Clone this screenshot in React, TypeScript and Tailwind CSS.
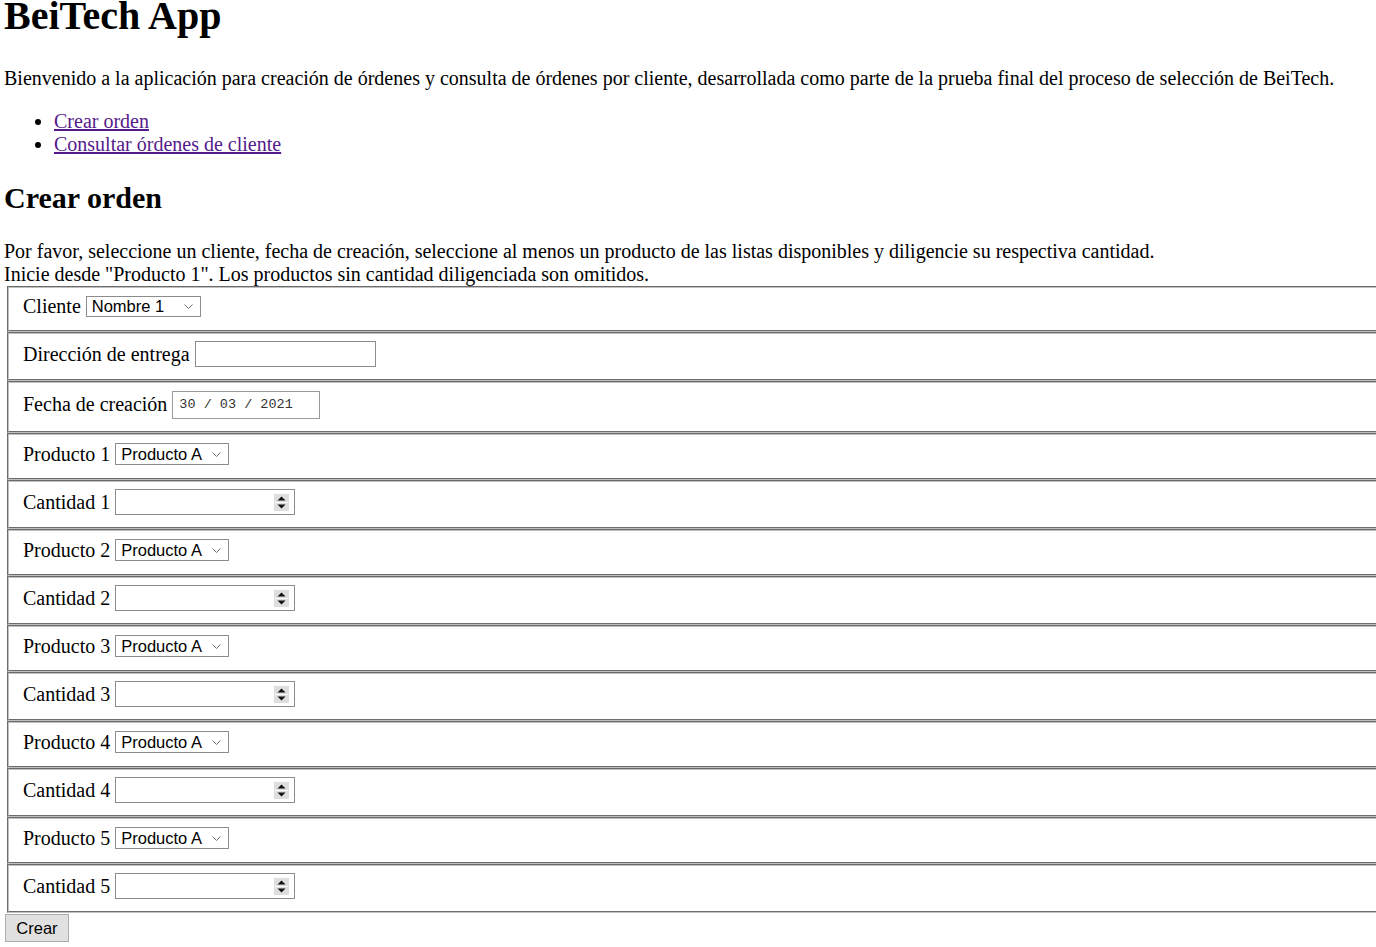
import React from "react";

const serif = "font-['Liberation_Serif','Times_New_Roman',serif]";
const sans = "font-['Liberation_Sans',Arial,sans-serif]";

function Chevron(): React.ReactElement {
  return (
    <svg width="9" height="5" viewBox="0 0 9 5" className="shrink-0">
      <polyline points="0.5,0.5 4.5,4.5 8.5,0.5" fill="none" stroke="#6e6e6e" strokeWidth="1" />
    </svg>
  );
}

function Select({ value, width, height }: { value: string; width: string; height: string }): React.ReactElement {
  return (
    <div
      className={`${width} ${height} ${sans} flex shrink-0 items-center justify-between border border-[#8c8c8c] bg-white pl-[5px] pr-[7px] text-[16.5px] leading-none text-black`}
    >
      <span>{value}</span>
      <Chevron />
    </div>
  );
}

function Spinner(): React.ReactElement {
  return (
    <svg width="15" height="17" viewBox="0 0 15 17" className="shrink-0">
      <rect x="0" y="0" width="15" height="17" fill="#dedede" />
      <line x1="1" y1="8.5" x2="14" y2="8.5" stroke="#ffffff" strokeWidth="1" />
      <polygon points="3.5,6.5 7.5,2.5 11.5,6.5" fill="#111111" />
      <polygon points="3.5,10.5 7.5,14.5 11.5,10.5" fill="#111111" />
    </svg>
  );
}

function Row({
  label,
  contentHeight,
  children,
}: {
  label: string;
  contentHeight: string;
  children: React.ReactNode;
}): React.ReactElement {
  return (
    <div className="ml-[3px] w-[1420px] border-2 border-[#c0c0c0] [border-style:groove] pt-[7px] pb-[12px] pl-[14px]">
      <div className={`flex ${contentHeight} items-center gap-[5px]`}>
        <span className="whitespace-nowrap">{label}</span>
        {children}
      </div>
    </div>
  );
}

export default function App(): React.ReactElement {
  const products = [1, 2, 3, 4, 5];

  return (
    <div className={`${serif} h-[947px] overflow-hidden bg-white pl-[4px] text-[20px] leading-[23px] text-black`}>
      <h1 className="mt-[-7px] text-[40px] leading-[46px] font-bold">BeiTech App</h1>
      <p className="mt-[28px] whitespace-nowrap">
        Bienvenido a la aplicación para creación de órdenes y consulta de órdenes por cliente, desarrollada como parte de
        la prueba final del proceso de selección de BeiTech.
      </p>
      <ul className="mt-[20px] list-disc pl-[50px]">
        <li>
          <a href="#" className="text-[#551a8b] underline">
            Crear orden
          </a>
        </li>
        <li>
          <a href="#" className="text-[#551a8b] underline">
            Consultar órdenes de cliente
          </a>
        </li>
      </ul>
      <h2 className="mt-[25px] text-[30px] leading-[34px] font-bold">Crear orden</h2>
      <div className="mt-[25px] whitespace-nowrap">
        Por favor, seleccione un cliente, fecha de creación, seleccione al menos un producto de las listas disponibles y
        diligencie su respectiva cantidad.
        <br />
        Inicie desde "Producto 1". Los productos sin cantidad diligenciada son omitidos.
      </div>

      <form>
        <Row label="Cliente" contentHeight="h-[23px]">
          <Select value="Nombre 1" width="w-[115px]" height="h-[21px]" />
        </Row>
        <Row label="Dirección de entrega" contentHeight="h-[26px]">
          <div className="h-[26px] w-[181px] shrink-0 border border-[#8c8c8c] bg-white" />
        </Row>
        <Row label="Fecha de creación" contentHeight="h-[29px]">
          <div className="flex h-[28px] w-[148px] shrink-0 items-center border border-[#9a9a9a] bg-white pl-[6px] font-['Liberation_Mono',monospace] text-[13.5px] text-[#333]">
            30 / 03 / 2021
          </div>
        </Row>
        {products.map((n) => (
          <React.Fragment key={n}>
            <Row label={`Producto ${n}`} contentHeight="h-[24px]">
              <Select value="Producto A" width="w-[114px]" height="h-[22px]" />
            </Row>
            <Row label={`Cantidad ${n}`} contentHeight="h-[26px]">
              <div className="flex h-[26px] w-[180px] shrink-0 items-center justify-end border border-[#8c8c8c] bg-white pr-[5px]">
                <Spinner />
              </div>
            </Row>
          </React.Fragment>
        ))}
        <button
          type="button"
          className={`${sans} mt-[1px] ml-[1px] h-[28px] w-[64px] border border-[#adadad] bg-[#e1e1e1] text-[16.5px] leading-none text-black`}
        >
          Crear
        </button>
      </form>
    </div>
  );
}
